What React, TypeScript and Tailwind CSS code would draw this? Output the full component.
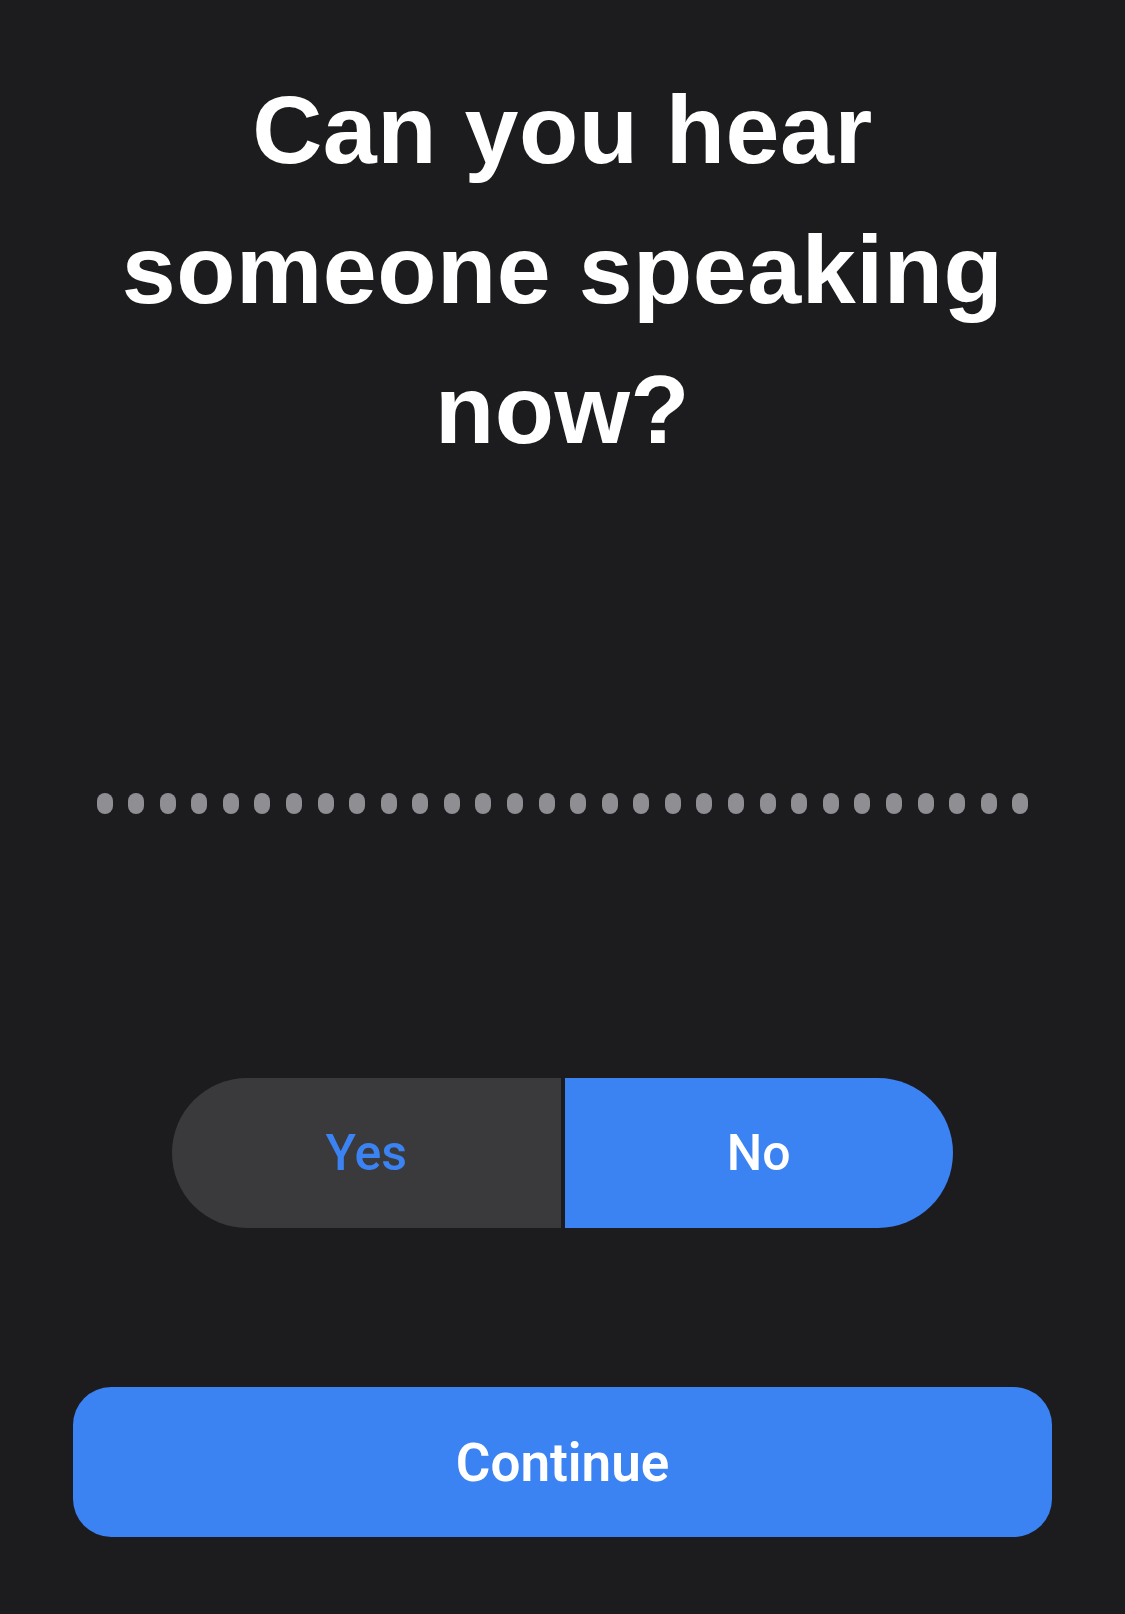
const dots = Array.from({ length: 30 });

export default function App() {
  return (
    <div
      className="w-full min-h-[1614px] bg-[#1c1c1f] flex flex-col items-center pt-[60px]"
      style={{ fontFamily: '"Liberation Sans", Arial, sans-serif' }}
    >
      {/* Title */}
      <h1 className="text-white text-center font-bold text-[97px] leading-[140px] tracking-[0.5px]">
        Can you hear
        <br />
        someone speaking
        <br />
        now?
      </h1>

      {/* Audio level dots */}
      <div className="w-[932px] mt-[313px] flex justify-between">
        {dots.map((_, i) => (
          <span key={i} className="w-4 h-[21px] rounded-full bg-[#8e8e93]" />
        ))}
      </div>

      {/* Yes / No segmented control */}
      <div className="mt-[264px] flex items-stretch gap-[4px] w-[781px] h-[150px] font-['Roboto',sans-serif] font-medium text-[50px]">
        <button className="flex-1 rounded-l-full bg-[#3a3a3c] text-[#3b82f3] flex items-center justify-center">
          Yes
        </button>
        <button className="flex-1 rounded-r-full bg-[#3b82f3] text-white flex items-center justify-center">
          No
        </button>
      </div>

      {/* Continue */}
      <button className="mt-[159px] w-[979px] h-[150px] rounded-[38px] bg-[#3b82f3] text-white font-['Roboto',sans-serif] font-semibold text-[53px] pt-[4px] flex items-center justify-center">
        Continue
      </button>
    </div>
  );
}
